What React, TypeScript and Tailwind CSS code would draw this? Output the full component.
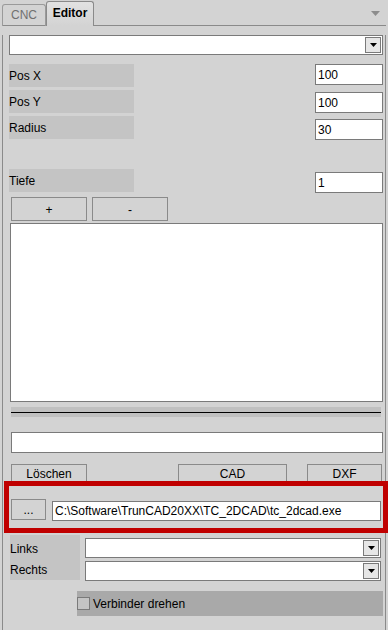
import React from "react";

const font = { fontFamily: '"Liberation Sans", Arial, sans-serif' };

function Arrow() {
  return (
    <svg width="7" height="4" viewBox="0 0 7 4">
      <path d="M0 0h7L3.5 4z" fill="#000" />
    </svg>
  );
}

function Combo({ className }: { className: string }) {
  return (
    <div className={`flex items-center justify-end border border-[#7a7a7a] bg-white pr-[1px] ${className}`}>
      <div className="flex h-[16px] w-[16px] items-center justify-center border border-[#7a7a7a] bg-[#e6e6e6]">
        <Arrow />
      </div>
    </div>
  );
}

function Box({ value, className }: { value?: string; className: string }) {
  return (
    <div className={`flex items-center border border-[#7a7a7a] bg-white pl-[2px] text-[12px] text-black ${className}`}>
      {value}
    </div>
  );
}

function Btn({ label, className }: { label: string; className: string }) {
  return (
    <div className={`flex shrink-0 items-start justify-center border border-[#8a8a8a] text-[12px] leading-[14px] text-black ${className}`}>
      {label}
    </div>
  );
}

function Field({ label, value, offset }: { label: string; value: string; offset: string }) {
  return (
    <div className="flex items-start justify-between pl-[6px] pr-[2px]">
      <div className="flex h-[23px] w-[125px] items-center bg-[#c4c4c4] text-[12px] text-black">{label}</div>
      <Box value={value} className={`h-[21px] w-[68px] ${offset}`} />
    </div>
  );
}

export default function App() {
  return (
    <div className="h-[630px] w-[388px] overflow-hidden bg-[#d3d3d3]" style={font}>
      {/* tabs */}
      <div className="relative flex h-[26px] items-end pl-[2px]">
        <div className="absolute bottom-0 left-[2px] right-[2px] h-px bg-[#8a8a8a]" />
        <div className="relative flex h-[22px] w-[44px] items-center justify-center rounded-t-[3px] border border-b-0 border-[#9a9a9a] pb-[1px] text-[12px] text-[#707070]">
          CNC
        </div>
        <div className="relative flex h-[25px] w-[48px] items-center justify-center rounded-t-[3px] border border-b-0 border-[#8a8a8a] bg-gradient-to-b from-[#e2e2e2] to-[#d3d3d3] pb-[3px] text-[12px] font-bold text-black">
          Editor
        </div>
        <div className="absolute right-[8px] top-[11px]">
          <svg width="9" height="5" viewBox="0 0 9 5">
            <path d="M0 0h9L4.5 5z" fill="#8c8c8c" />
          </svg>
        </div>
      </div>

      {/* panel */}
      <div className="ml-[2px] h-[603px] w-[384px] border border-t-0 border-[#8a8a8a]">
        <Combo className="ml-[6px] mt-[9px] h-[20px] w-[374px]" />

        <div className="mt-[9px] flex flex-col gap-[3px]">
          <Field label="Pos X" value="100" offset="mt-0" />
          <Field label="Pos Y" value="100" offset="mt-[2px]" />
          <Field label="Radius" value="30" offset="mt-[3px]" />
        </div>
        <div className="mt-[29px]">
          <Field label="Tiefe" value="1" offset="mt-[3px]" />
        </div>

        <div className="ml-[8px] mt-[4px] flex gap-[5px]">
          <Btn label="+" className="h-[24px] w-[76px] pt-[5px]" />
          <Btn label="-" className="h-[24px] w-[76px] pt-[5px]" />
        </div>

        <div className="ml-[7px] mt-[2px] h-[179px] w-[373px] border border-[#7a7a7a] bg-white" />

        <div className="ml-[8px] mt-[5px] flex h-[10px] w-[370px] items-center bg-[#c0c0c0]">
          <div className="h-px w-full bg-black" />
        </div>

        <Box className="ml-[8px] mt-[15px] h-[21px] w-[372px]" />

        <div className="mt-[11px] flex h-[17px] items-start overflow-hidden">
          <Btn label="Löschen" className="ml-[8px] h-[23px] w-[76px] pt-[2px]" />
          <Btn label="CAD" className="ml-[91px] h-[23px] w-[109px] pt-[2px]" />
          <Btn label="DXF" className="ml-[20px] h-[23px] w-[75px] pt-[2px]" />
        </div>

        <div className="relative ml-[1px] flex h-[52px] w-[384px] items-start border-[5px] border-[#c00000]">
          <Btn label="..." className="ml-[2px] mt-[13px] h-[21px] w-[35px] pt-[3px]" />
          <Box
            value="C:\Software\TrunCAD20XX\TC_2DCAD\tc_2dcad.exe"
            className="ml-[6px] mt-[15px] h-[20px] w-[329px]"
          />
        </div>

        <div className="mt-[2px] flex items-start">
          <div className="ml-[7px] flex h-[45px] w-[70px] flex-col bg-[#c4c4c4] pt-[4px] text-[12px] leading-[21px] text-black">
            <span>Links</span>
            <span>Rechts</span>
          </div>
          <div className="ml-[5px] mt-[3px] flex flex-col gap-[3px]">
            <Combo className="h-[20px] w-[296px]" />
            <Combo className="h-[20px] w-[296px]" />
          </div>
        </div>

        <div className="ml-[74px] mt-[10px] flex h-[25px] w-[306px] items-center bg-[#a9a9a9] text-[12px] text-black">
          <div className="h-[13px] w-[13px] border border-[#7a7a7a] bg-[#c4c4c4]" />
          <span className="ml-[3px]">Verbinder drehen</span>
        </div>
      </div>
    </div>
  );
}
